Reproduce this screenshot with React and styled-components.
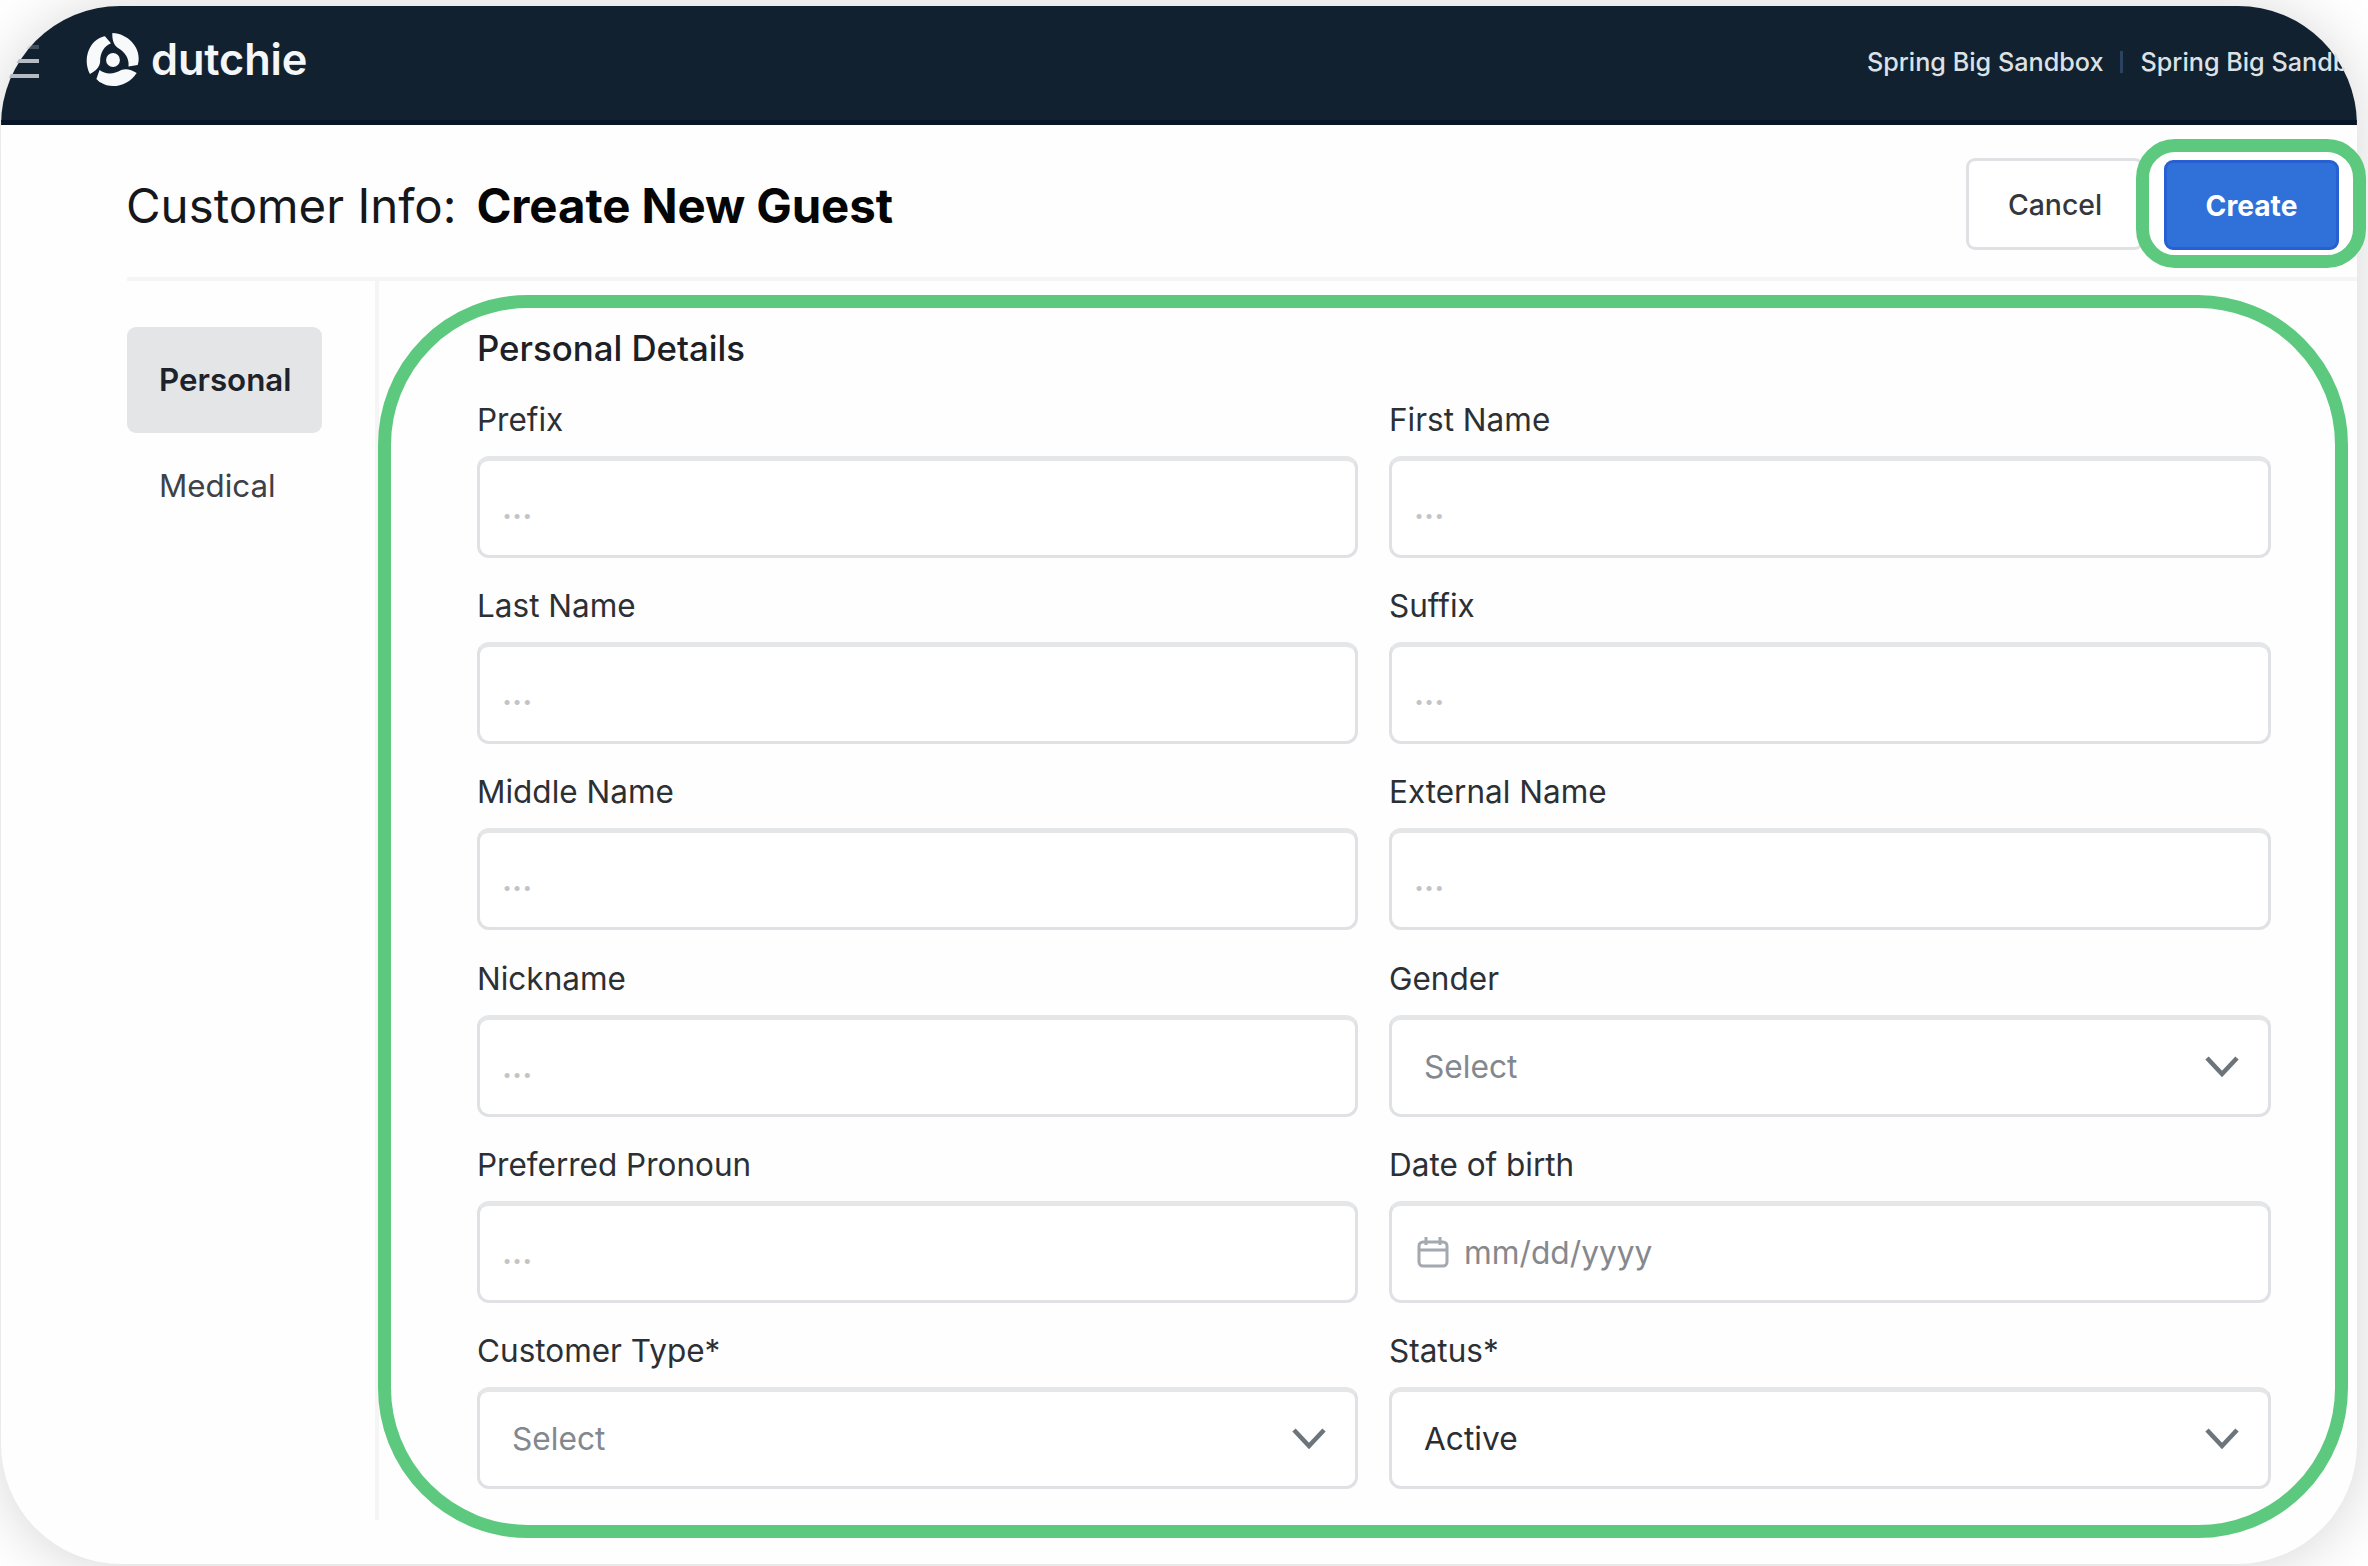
import React from 'react';
import styled, { createGlobalStyle } from 'styled-components';

const GlobalStyle = createGlobalStyle`
  *, *::before, *::after { box-sizing: border-box; }
  body { margin: 0; background: #fff; font-family: Inter, "Liberation Sans", sans-serif; }
  button { font-family: inherit; }
`;

const Page = styled.div`
  height: 1566px;
  padding: 6px 11px 2px 1px;
  overflow: hidden;
  display: flex;
  background: #fff;
`;

const Card = styled.div`
  flex: 1;
  min-width: 0;
  display: flex;
  flex-direction: column;
  border-radius: 120px;
  background: #fefefe;
  box-shadow: 0 3px 60px rgba(0, 0, 0, 0.17);
`;

const TopBar = styled.header`
  height: 119px;
  flex: none;
  display: flex;
  align-items: flex-start;
  overflow: hidden;
  border-radius: 119px 119px 0 0;
  background: #112130;
  border-bottom: 5px solid #071526;
  color: #fff;
`;

const MenuIcon = styled.svg`
  width: 40px;
  height: 40px;
  margin-top: 37px;
  flex: none;
`;

const LogoMark = styled.svg`
  width: 54px;
  height: 54px;
  margin: 27px 0 0 45px;
  flex: none;
`;

const Wordmark = styled.span`
  margin: 23px 0 0 11px;
  font-size: 43.3px;
  line-height: 60px;
  font-weight: 600;
  letter-spacing: -0.1px;
  color: #f4f6f8;
`;

const Account = styled.div`
  margin: 36px -20px 0 auto;
  display: flex;
  align-items: center;
  font-size: 25.2px;
  line-height: 40px;
  font-weight: 500;
  color: #dde1e6;
  white-space: nowrap;
`;

const AccountDivider = styled.span`
  width: 3px;
  height: 22px;
  margin: 0 17px;
  background: #2c4261;
`;

const TitleRow = styled.div`
  height: 156px;
  flex: none;
  display: flex;
  align-items: flex-start;
  margin-left: 126px;
  padding-top: 14px;
  border-bottom: 4px solid #f5f5f5;
`;

const Title = styled.h1`
  margin: 37px 0 0 -1px;
  font-size: 47.4px;
  line-height: 60px;
  font-weight: 400;
  color: #15171a;
  white-space: nowrap;
`;

const TitleStrong = styled.strong`
  margin-left: 20px;
  font-weight: 700;
  letter-spacing: -0.1px;
  color: #050505;
`;

const Actions = styled.div`
  margin: 0 -9px 0 auto;
  display: flex;
`;

const Button = styled.button`
  flex: none;
  width: ${(p) => (p.$primary ? '175px' : '178px')};
  height: ${(p) => (p.$primary ? '90px' : '92px')};
  padding: 1px 0 0;
  border-radius: 9px;
  border: 3px solid ${(p) => (p.$primary ? '#2760d3' : '#dfe1e4')};
  background: ${(p) => (p.$primary ? '#3070d9' : '#fff')};
  color: ${(p) => (p.$primary ? '#fff' : '#34383d')};
  font-size: ${(p) => (p.$primary ? '28.2px' : '28.4px')};
  font-weight: ${(p) => (p.$primary ? 700 : 500)};
  text-align: center;
`;

const CancelSlot = styled.div`
  margin: 19px -8px 0 0;
`;

const Highlight = styled.div`
  border: 13px solid #5dc97e;
`;

const ButtonHighlight = styled(Highlight)`
  position: relative;
  width: 230px;
  height: 129px;
  padding: 8px 0 0 15px;
  border-radius: 39px;
  background: #fff;
`;

const Body = styled.div`
  display: flex;
  align-items: flex-start;
  margin-left: 126px;
`;

const SideNav = styled.nav`
  width: 252px;
  height: 1239px;
  flex: none;
  padding-top: 46px;
  border-right: 4px solid #f5f5f5;
`;

const NavItem = styled.div`
  width: 195px;
  height: 106px;
  padding: 0 0 1px 32px;
  display: flex;
  align-items: center;
  border-radius: 9px;
  background: ${(p) => (p.$active ? '#e3e5e7' : 'transparent')};
  color: ${(p) => (p.$active ? '#1e222b' : '#3d4148')};
  font-size: 31.3px;
  font-weight: ${(p) => (p.$active ? 600 : 400)};
`;

const FormSection = styled(Highlight)`
  width: 1970px;
  height: 1243px;
  margin: 14px 0 0 -1px;
  padding: 18px 0 0 86px;
  border-radius: 150px;
`;

const SectionTitle = styled.h2`
  margin: 0 0 30px 0;
  font-size: 34.8px;
  line-height: 44px;
  font-weight: 500;
  color: #1d2024;
`;

const FieldGrid = styled.div`
  display: grid;
  grid-template-columns: 881px 882px;
  column-gap: 31px;
  row-gap: 28.2px;
`;

const Field = styled.div`
  display: flex;
  flex-direction: column;
`;

const Label = styled.label`
  margin-bottom: 16px;
  font-size: 31.5px;
  line-height: 40px;
  color: #2c3035;
`;

const Control = styled.div`
  height: 102px;
  display: flex;
  align-items: center;
  padding: ${(p) => p.$pad};
  border: 3px solid #dfe1e4;
  border-top: 5px solid #e4e6e8;
  border-radius: 12px;
  background: #fff;
  font-size: 31.7px;
  line-height: 40px;
  font-weight: ${(p) => p.$weight || 400};
  color: ${(p) => p.$color};
`;

const Chevron = styled.svg`
  width: 34px;
  height: 24px;
  margin-left: auto;
`;

const CalendarIcon = styled.svg`
  width: 34px;
  height: 34px;
  margin-right: 14px;
`;

const fields = [
  { label: 'Prefix' },
  { label: 'First Name' },
  { label: 'Last Name' },
  { label: 'Suffix' },
  { label: 'Middle Name' },
  { label: 'External Name' },
  { label: 'Nickname' },
  { label: 'Gender', kind: 'select', value: 'Select' },
  { label: 'Preferred Pronoun' },
  { label: 'Date of birth', kind: 'date' },
  { label: 'Customer Type*', kind: 'select', value: 'Select' },
  { label: 'Status*', kind: 'select', value: 'Active', filled: true },
];

function FieldControl({ kind, value, filled }) {
  if (kind === 'select') {
    return (
      <Control $pad="0 29px 0 32px" $color={filled ? '#2a2e33' : '#83888e'}>
        {value}
        <Chevron viewBox="0 0 34 24" fill="none" stroke="#6c757c" strokeWidth="4.6">
          <path d="M2 3 L17 19 L32 3" />
        </Chevron>
      </Control>
    );
  }
  if (kind === 'date') {
    return (
      <Control $pad="0 0 0 24px" $color="#85898e">
        <CalendarIcon viewBox="0 0 34 34" fill="none" stroke="#a3a9ae" strokeWidth="3">
          <rect x="3" y="6" width="28" height="24" rx="4" />
          <path d="M3 14 H31 M10 1 V9 M24 1 V9" />
        </CalendarIcon>
        mm/dd/yyyy
      </Control>
    );
  }
  return (
    <Control $pad="0 0 0 22px" $color="#c2c4c7" $weight={600}>
      ...
    </Control>
  );
}

const BLADE =
  'M80 0 C128 2 162 42 160 80 C160 86 159 91 157 97 L129 102 C132 80 120 58 96 45 C84 36 79 20 80 0 Z';

export default function App() {
  return (
    <>
      <GlobalStyle />
      <Page>
        <Card>
          <TopBar>
            <MenuIcon viewBox="0 0 40 40" stroke="#b4bbc3" strokeWidth="4">
              <path d="M0 4 H38" opacity="0.3" />
              <path d="M0 18 H38 M0 33 H38" />
            </MenuIcon>
            <LogoMark viewBox="0 0 164 164" fill="#f8f9fa">
              {[0, 120, 240].map((angle) => (
                <path key={angle} d={BLADE} transform={`rotate(${angle} 82 82)`} />
              ))}
              <circle cx="82" cy="82" r="21" />
            </LogoMark>
            <Wordmark>dutchie</Wordmark>
            <Account>
              <span>Spring Big Sandbox</span>
              <AccountDivider />
              <span>Spring Big Sandbox</span>
            </Account>
          </TopBar>
          <TitleRow>
            <Title>
              Customer Info:
              <TitleStrong>Create New Guest</TitleStrong>
            </Title>
            <Actions>
              <CancelSlot>
                <Button>Cancel</Button>
              </CancelSlot>
              <ButtonHighlight>
                <Button $primary>Create</Button>
              </ButtonHighlight>
            </Actions>
          </TitleRow>
          <Body>
            <SideNav>
              <NavItem $active>Personal</NavItem>
              <NavItem>Medical</NavItem>
            </SideNav>
            <FormSection>
              <SectionTitle>Personal Details</SectionTitle>
              <FieldGrid>
                {fields.map((field) => (
                  <Field key={field.label}>
                    <Label>{field.label}</Label>
                    <FieldControl {...field} />
                  </Field>
                ))}
              </FieldGrid>
            </FormSection>
          </Body>
        </Card>
      </Page>
    </>
  );
}
